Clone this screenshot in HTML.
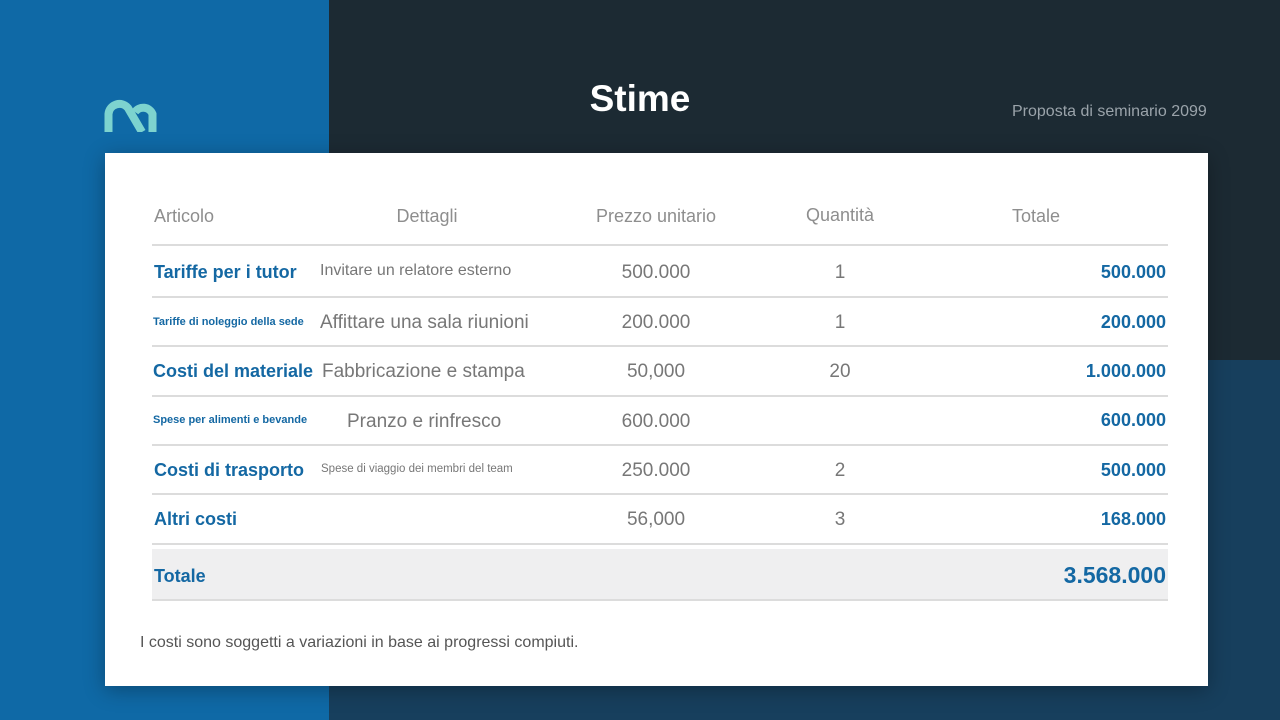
<!DOCTYPE html>
<html><head><meta charset="utf-8"><style>
*{margin:0;padding:0;box-sizing:border-box}
body{width:1280px;height:720px;position:relative;overflow:hidden;font-family:"Liberation Sans",sans-serif;background:#1c2a33}
.bl{position:absolute;left:0;top:0;width:329px;height:720px;background:#0f69a6}
.br{position:absolute;left:329px;top:360px;width:951px;height:360px;background:#173f5d}
.card{position:absolute;left:105px;top:153px;width:1103px;height:533px;background:#fff;box-shadow:0 4px 20px rgba(0,0,0,.3)}
h1{position:absolute;left:540px;top:78px;width:200px;text-align:center;color:#fff;font-size:37px;font-weight:bold}
.sub{position:absolute;left:1012px;top:103px;color:#9aa3aa;font-size:16px}
.t{position:absolute;white-space:nowrap;line-height:1}
.h{color:#8e8e8e;font-size:18px}
.b{color:#1468a3;font-weight:bold}
.g{color:#777;font-size:19px}
.ln{position:absolute;left:152px;width:1016px;height:2px;background:#dcdcdc}
.c{transform:translateX(-50%)}
.r{transform:translateX(-100%)}
</style></head><body>
<div class="bl"></div><div class="br"></div>
<svg style="position:absolute;left:104px;top:99px" width="53" height="33" viewBox="0 0 53 33"><path d="M4.5 33V15A11 11 0 0 1 24 9L38 33" fill="none" stroke="#7dd3cf" stroke-width="8"/><path d="M31 13A10 10 0 0 1 48.5 15V33" fill="none" stroke="#7dd3cf" stroke-width="8"/></svg>
<h1>Stime</h1>
<div class="sub">Proposta di seminario 2099</div>
<div class="card"></div>
<div style="position:absolute;left:152px;top:549px;width:1016px;height:51px;background:#efeff0"></div>
<div class="t h" style="left:154px;top:207px">Articolo</div>
<div class="t h c" style="left:427px;top:207px">Dettagli</div>
<div class="t h c" style="left:656px;top:207px">Prezzo unitario</div>
<div class="t h c" style="left:840px;top:206px">Quantità</div>
<div class="t h c" style="left:1036px;top:207px">Totale</div>
<div class="ln" style="top:244px"></div>
<div class="ln" style="top:296px"></div>
<div class="ln" style="top:345px"></div>
<div class="ln" style="top:395px"></div>
<div class="ln" style="top:444px"></div>
<div class="ln" style="top:493px"></div>
<div class="ln" style="top:543px"></div>
<div class="ln" style="top:599px"></div>

<div class="t b" style="left:154px;top:263px;font-size:18px">Tariffe per i tutor</div>
<div class="t g" style="left:320px;top:263px;font-size:16px">Invitare un relatore esterno</div>
<div class="t g c" style="left:656px;top:263px">500.000</div>
<div class="t g c" style="left:840px;top:263px">1</div>
<div class="t b r" style="left:1166px;top:263px;font-size:18px">500.000</div>

<div class="t b" style="left:153px;top:317px;font-size:11px">Tariffe di noleggio della sede</div>
<div class="t g" style="left:320px;top:313px">Affittare una sala riunioni</div>
<div class="t g c" style="left:656px;top:313px">200.000</div>
<div class="t g c" style="left:840px;top:313px">1</div>
<div class="t b r" style="left:1166px;top:313px;font-size:18px">200.000</div>

<div class="t b" style="left:153px;top:362px;font-size:18px">Costi del materiale</div>
<div class="t g" style="left:322px;top:362px">Fabbricazione e stampa</div>
<div class="t g c" style="left:656px;top:362px">50,000</div>
<div class="t g c" style="left:840px;top:362px">20</div>
<div class="t b r" style="left:1166px;top:362px;font-size:18px">1.000.000</div>

<div class="t b" style="left:153px;top:415px;font-size:11px">Spese per alimenti e bevande</div>
<div class="t g" style="left:347px;top:412px">Pranzo e rinfresco</div>
<div class="t g c" style="left:656px;top:412px">600.000</div>
<div class="t b r" style="left:1166px;top:411px;font-size:18px">600.000</div>

<div class="t b" style="left:154px;top:461px;font-size:18px">Costi di trasporto</div>
<div class="t g" style="left:321px;top:464px;font-size:11.5px">Spese di viaggio dei membri del team</div>
<div class="t g c" style="left:656px;top:461px">250.000</div>
<div class="t g c" style="left:840px;top:461px">2</div>
<div class="t b r" style="left:1166px;top:461px;font-size:18px">500.000</div>

<div class="t b" style="left:154px;top:510px;font-size:18px">Altri costi</div>
<div class="t g c" style="left:656px;top:510px">56,000</div>
<div class="t g c" style="left:840px;top:510px">3</div>
<div class="t b r" style="left:1166px;top:510px;font-size:18px">168.000</div>

<div class="t b" style="left:154px;top:567px;font-size:18px">Totale</div>
<div class="t b r" style="left:1166px;top:564px;font-size:23px">3.568.000</div>

<div class="t" style="left:140px;top:635px;font-size:16px;color:#555">I costi sono soggetti a variazioni in base ai progressi compiuti.</div>
</body></html>
